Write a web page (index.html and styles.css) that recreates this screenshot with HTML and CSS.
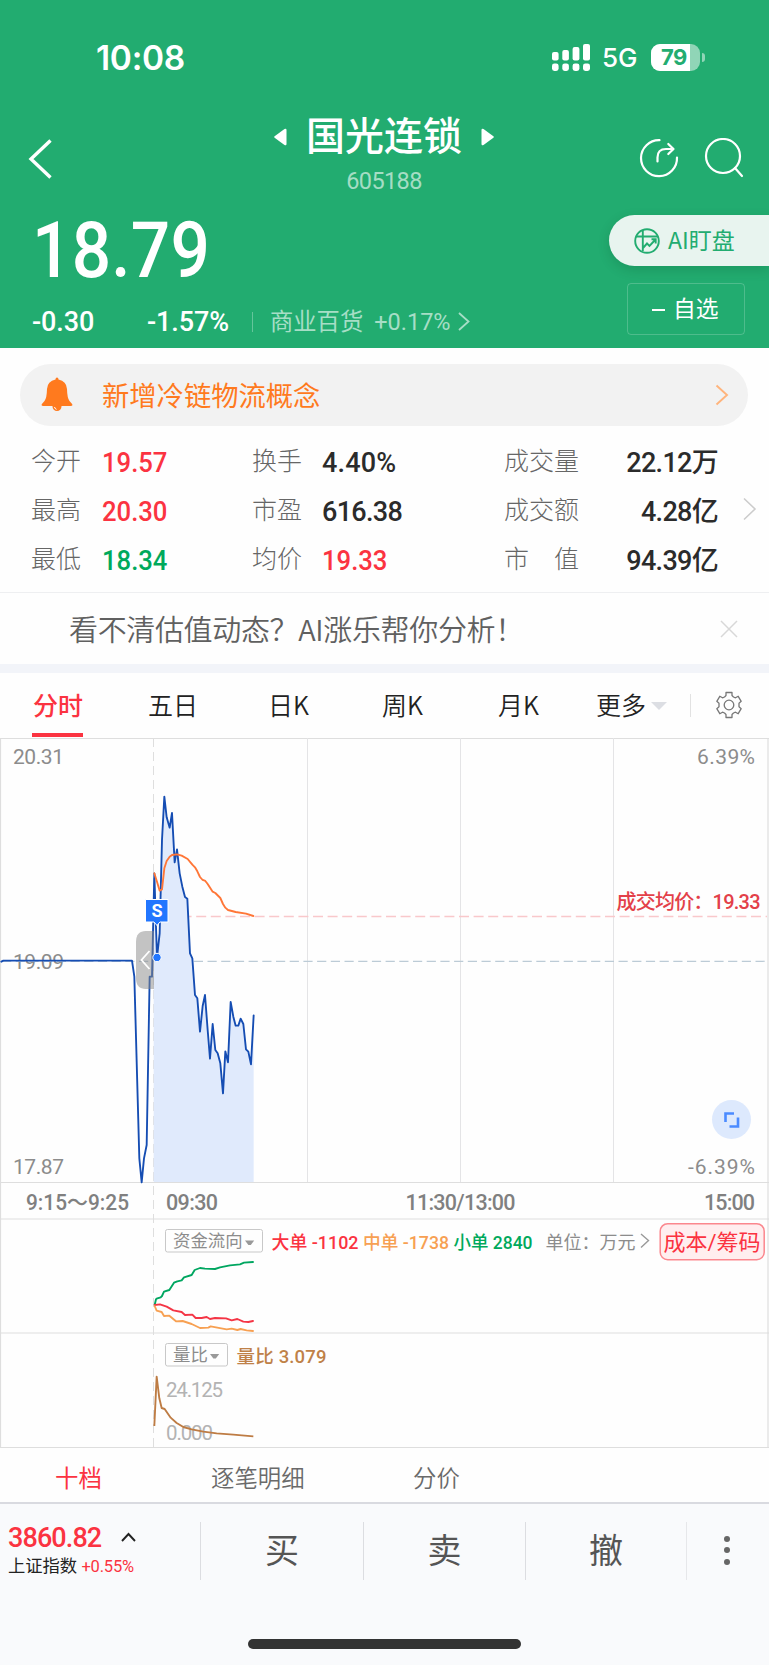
FILE: index.html
```html
<!DOCTYPE html>
<html lang="zh-CN">
<head>
    <meta charset="UTF-8">
    <title>国光连锁 605188</title>
    <link rel="stylesheet" href="styles.css">
</head>
<body>
    <header class="header">
        <div class="status-bar">
            <span class="time">10:08</span>
            <div class="status-icons">
                <svg class="signal" width="38" height="27" viewBox="0 0 38 27" fill="#fff">
                    <rect x="0" y="8" width="6.6" height="8.4" rx="2"/><rect x="10.3" y="6" width="6.6" height="10.4" rx="2"/>
                    <rect x="20.6" y="3" width="6.8" height="13.4" rx="2"/><rect x="31" y="0" width="7" height="16.4" rx="2"/>
                    <rect x="0" y="19.4" width="6.6" height="7.6" rx="2.4"/><rect x="10.3" y="19.4" width="6.6" height="7.6" rx="2.4"/>
                    <rect x="20.6" y="19.4" width="6.8" height="7.6" rx="2.4"/><rect x="31" y="19.4" width="7" height="7.6" rx="2.4"/>
                </svg>
                <span class="network">5G</span>
                <span class="battery"><span class="battery-level">79</span></span>
                <span class="battery-nub"></span>
            </div>
        </div>

        <div class="title-bar">
            <svg class="back" width="24" height="40" viewBox="0 0 24 40" fill="none" stroke="#fff" stroke-width="3.4"><path d="M22.5 1.5 3 20l19.500 18.500"/></svg>
            <div class="title">
                <div class="name-row">
                    <svg width="13" height="18" viewBox="0 0 13 18" fill="#fff"><path d="M.6 8.300 10.500 1Q12.500 0 12.500 2v14q0 2-2 1L.6 9.700Q-.2 9 .6 8.300z"/></svg>
                    <h1>国光连锁</h1>
                    <svg width="13" height="18" viewBox="0 0 13 18" fill="#fff"><path d="M12.400 8.300 2.500 1Q.5 0 .5 2v14q0 2 2 1l9.900-7.300q.8-.7 0-1.400z"/></svg>
                </div>
                <div class="code">605188</div>
            </div>
            <div class="title-actions">
                <svg width="40" height="40" viewBox="0 0 40 40" fill="none" stroke="#fff" stroke-width="2.2" stroke-linecap="round" stroke-linejoin="round">
                    <path d="M20.500 2.200A18 18 0 1 0 38 19.500M18.500 23.500v-4q0-8.500 8.500-8.500h7M29.300 6l5.200 5-5.200 5"/>
                </svg>
                <svg width="40" height="40" viewBox="0 0 40 40" fill="none" stroke="#fff" stroke-width="2.200" stroke-linecap="round">
                    <circle cx="19" cy="18" r="17"/><path d="m31 30 7 8"/>
                </svg>
            </div>
        </div>

        <div class="quote">
            <div class="quote-left">
                <div class="price">18.79</div>
                <div class="change-row">
                    <span class="change">-0.30</span>
                    <span class="change-pct">-1.57%</span>
                    <span class="sector">商业百货</span>
                    <span class="sector-pct">+0.17%</span>
                    <svg width="12" height="19" viewBox="0 0 12 19" fill="none" stroke="#a6dec6" stroke-width="1.800"><path d="m1 1 9.500 8.500L1 18"/></svg>
                </div>
            </div>
            <div class="quote-right">
                <div class="ai-watch">
                    <svg width="26" height="26" viewBox="0 0 26 26" fill="none" stroke="#22ac70" stroke-width="1.900">
                        <circle cx="13" cy="13" r="11.800"/><path d="M2 8.500h22M8.800 2v21M9 20l4-4.500 2.500 2.500 6-6.500M17.500 11.300h4.200v4.200"/>
                    </svg>
                    <span>AI盯盘</span>
                </div>
                <div class="watchlist"><i></i>自选</div>
            </div>
        </div>
    </header>

    <div class="notice">
        <svg class="bell" width="32" height="35" viewBox="0 0 32 35" fill="#ff7a1e">
            <path d="M14.500 2.500Q14.500.5 16 .5t1.500 2Q25.500 4 26 12q.2 9 2.500 12l2.800 3.200q.7 1.800-1.300 1.800H2Q0 29 .7 27.200L3.500 24Q5.800 21 6 12q.5-8 8.500-9.500z"/>
            <path d="M11.500 28.500h9v1a4.500 4.500 0 0 1-9 0z"/><path d="M13.500 30q.3 1.800 2 2.300" fill="none" stroke="#fff" stroke-width="1"/>
        </svg>
        <span class="notice-text">新增冷链物流概念</span>
        <svg width="14" height="22" viewBox="0 0 14 22" fill="none" stroke="#ffb47c" stroke-width="1.900"><path d="m1.500 1.500 10.500 9.500-10.500 9.500"/></svg>
    </div>

    <section class="stats">
        <div class="stats-grid">
            <span class="label">今开</span><b class="up">19.57</b>
            <span class="label">换手</span><b class="pct">4.40%</b>
            <span class="label">成交量</span><b class="right">22.12万</b>
            <span class="label">最高</span><b class="up">20.30</b>
            <span class="label">市盈</span><b>616.38</b>
            <span class="label">成交额</span><b class="right">4.28亿</b>
            <span class="label">最低</span><b class="down">18.34</b>
            <span class="label">均价</span><b class="up">19.33</b>
            <span class="label">市　值</span><b class="right">94.39亿</b>
        </div>
        <svg width="14" height="24" viewBox="0 0 14 24" fill="none" stroke="#ccc" stroke-width="1.600"><path d="m1 1.500 11 10.500L1 22.500"/></svg>
    </section>

    <div class="promo">
        <span>看不清估值动态？AI涨乐帮你分析！</span>
        <svg width="18" height="18" viewBox="0 0 18 18" stroke="#d8d8d8" stroke-width="1.500"><path d="m1 1 16 16M17 1 1 17"/></svg>
    </div>

    <nav class="period-tabs">
        <span class="active">分时</span>
        <span>五日</span>
        <span>日K</span>
        <span>周K</span>
        <span>月K</span>
        <span class="more">更多<i class="caret"></i></span>
        <svg class="gear" width="28" height="28" viewBox="0 0 28 28" fill="none" stroke="#777" stroke-width="1.300" stroke-linejoin="round">
            <path d="M11 1.500h6v3l1.500 1.500 2 .8 2.700-1.500 3 5-2.200 1.900v3.600l2.200 1.900-3 5-2.700-1.500-2 .8-1.500 1.500v3h-6v-3L9.500 22l-2-.8-2.700 1.500-3-5L4 15.800v-3.600l-2.200-1.900 3-5 2.700 1.500 2-.8L11 4.500z"/>
            <circle cx="14" cy="14" r="4.800"/>
        </svg>
    </nav>

    <svg class="chart" width="769" height="710" viewBox="0 738 769 710">
        <!-- grid -->
        <g stroke="#dedede" fill="none">
            <path d="M0 738.500h769M0 1182.500h769M0 1219h769M0 1333h769M0 1447.500h769" stroke-width="1.200"/>
            <path d="M.5 738v710M768 738v710" stroke-width="1.200"/>
            <path d="M307.500 738v444M460.500 738v444M613.500 738v444" stroke="#e4e4e6"/>
            <path d="M153.500 738v710" stroke-dasharray="9 5"/>
        </g>

        <!-- price labels -->
        <g class="axis">
            <text x="13" y="763.500" textLength="51" lengthAdjust="spacing">20.31</text>
            <text x="13" y="968.500" textLength="51">19.09</text>
            <text x="13" y="1173.500" textLength="51">17.87</text>
            <text x="697" y="763.500" textLength="58">6.39%</text>
            <text x="688" y="1173.500" textLength="67">-6.39%</text>
        </g>

        <!-- intraday price and average -->
        <path d="M167 916.500h600" stroke="#f9c8cb" stroke-width="1.300" stroke-dasharray="10 4.600"/>
        <path d="M2 961.300h766" stroke="#bccbd6" stroke-width="1.200" stroke-dasharray="9.200 4.500"/>
        <g transform="translate(0 730) scale(.33333)" fill="none" stroke-linejoin="round" stroke-linecap="round">
            <path class="area" d="M461 1356V500l2-70 4 130 4 122 8-72 7-280 7-130 7 62 9 31 7-44 8 148 7-39 8 72 8 40 8 31 7 5 8 164 7 15 8 110 7 10 8 100 8-77 7-33 8 105 7 86 8-104 8 78 7 10 8 30 8 90 7-126 8 33 8-181 8 44 7 27h8l7-21 8 16 8 76 7 7 8 38 8-147V1356z"/>
            <path d="M4 695 10 692H396l7 48 15 545 7 72 7-72 8-40 9-505h7l7-310 4 130 4 122 8-72 7-280 7-130 7 62 9 31 7-44 8 148 7-39 8 72 8 40 8 31 7 5 8 164 7 15 8 110 7 10 8 100 8-77 7-33 8 105 7 86 8-104 8 78 7 10 8 30 8 90 7-126 8 33 8-181 8 44 7 27h8l7-21 8 16 8 76 7 7 8 38 8-147" stroke="#154db3" stroke-width="5.600"/>
            <path d="M463 430 471 455 479 482 486 478 493 415 500 393 509 380 516 375 531 373 545 377 563 387 577 404 585 412 592 424 600 441 608 450 616 453 623 462 638 485 646 489 661 504 669 522 676 533 684 540 707 546 738 551 760 558" stroke="#ff7637" stroke-width="5.600"/>
        </g>
        <text class="avg-label" x="616.500" y="908.500" textLength="144">成交均价：19.33</text>

        <!-- collapse handle -->
        <path d="M154 931h-8q-10 0-10 11v36q0 11 10 11h8z" fill="#888" fill-opacity=".5"/>
        <path d="m149.500 951-8 9 8 9" fill="none" stroke="#fff" stroke-width="1.800"/>

        <!-- sell marker -->
        <path d="M145.500 899.500h22.500v22.500h-8l-3 3.500-3-3.500h-8.500z" fill="#2176ff" stroke="#fff" stroke-width="1"/>
        <text class="sell" x="157" y="917" text-anchor="middle">S</text>
        <circle cx="157" cy="957.500" r="4.200" fill="#2176ff" stroke="#fff" stroke-width="1"/>

        <!-- fullscreen -->
        <circle cx="731.500" cy="1119.500" r="19.500" fill="#dde9fd"/>
        <path d="M725.500 1122v-8.500h8.500M738 1117.500v9h-8.500" fill="none" stroke="#4b8bff" stroke-width="2.600"/>

        <!-- time labels -->
        <g class="axis time-axis">
            <text x="26" y="1209.500" textLength="103" lengthAdjust="spacingAndGlyphs">9:15～9:25</text>
            <text x="166" y="1209.500" textLength="52">09:30</text>
            <text x="405.500" y="1209.500" textLength="110">11:30/13:00</text>
            <text x="704" y="1209.500" textLength="51">15:00</text>
        </g>

        <!-- money flow -->
        <g>
            <rect class="select" x="165.500" y="1229.500" width="97" height="22.500" rx="2"/>
            <text class="select-text" x="173" y="1247">资金流向</text>
            <path d="M245 1240.500h9.200l-3.400 4.500h-2.400z" fill="#999"/>
            <text class="legend" x="271.500" y="1249" textLength="87" lengthAdjust="spacingAndGlyphs" fill="#fb3341">大单 -1102</text>
            <text class="legend" x="363" y="1249" textLength="86" lengthAdjust="spacingAndGlyphs" fill="#f7a052">中单 -1738</text>
            <text class="legend" x="453.500" y="1249" textLength="79" lengthAdjust="spacingAndGlyphs" fill="#00a95c">小单 2840</text>
            <text class="unit" x="545.500" y="1249" textLength="90">单位：万元</text>
            <path d="m641 1234 7.500 6.500-7.500 7" fill="none" stroke="#999" stroke-width="1.400"/>
            <rect x="660.200" y="1223.700" width="104" height="36" rx="7.500" fill="#ffeeef" stroke="#fb878e" stroke-width="1.500"/>
            <text class="chips" x="663.500" y="1249.500" textLength="97">成本/筹码</text>
        </g>
        <g transform="translate(0 1180) scale(.33333)" fill="none" stroke-width="5.600" stroke-linejoin="round" stroke-linecap="round">
            <path stroke="#00a660" d="M464 375 468 358 472 355 482 352 486 348 492 335 508 330 522 308 532 304 545 301 552 292 575 285 584 270 600 264 615 266 645 267 660 262 690 256 720 253 732 248 759 246"/>
            <path stroke="#f43545" d="M464 375 480 373 500 380 520 391 545 396 555 405 577 404 587 414 605 414 620 411 630 417 645 414 678 415 695 421 712 417 730 425 745 426 759 423"/>
            <path stroke="#f7a052" d="M464 378 470 392 485 396 492 408 508 407 528 424 548 423 575 432 600 444 625 443 632 439 680 448 695 446 712 450 722 447 740 451 759 453"/>
        </g>

        <!-- volume ratio -->
        <rect class="select" x="165.500" y="1343.500" width="62" height="22.500" rx="2"/>
        <text class="select-text" x="173" y="1361">量比</text>
        <path d="M210 1354h9.200l-3.400 4.500h-2.400z" fill="#999"/>
        <text class="legend" x="236.500" y="1363" textLength="90" fill="#bf8148">量比 3.079</text>
        <text class="ratio-axis" x="166" y="1397" textLength="57">24.125</text>
        <text class="ratio-axis" x="166" y="1440" textLength="47">0.000</text>
        <path transform="translate(0 1180) scale(.33333)" fill="none" stroke="#be7c44" stroke-width="5.600" stroke-linejoin="round" d="M463 738 470 590 478 655 485 684 494 687 512 713 530 729 550 741 575 748 610 755 650 760 700 764 760 769"/>
    </svg>

    <nav class="detail-tabs">
        <span class="active">十档</span>
        <span>逐笔明细</span>
        <span>分价</span>
    </nav>

    <footer class="bottom-bar">
        <div class="actions">
            <div class="index">
                <div class="index-value">3860.82
                    <svg width="15" height="10" viewBox="0 0 15 10" fill="none" stroke="#222" stroke-width="1.900"><path d="m1 9 6.500-7L14 9"/></svg>
                </div>
                <div class="index-name">上证指数 <span>+0.55%</span></div>
            </div>
            <div class="action">买</div>
            <div class="action">卖</div>
            <div class="action">撤</div>
            <div class="menu"><i></i><i></i><i></i></div>
        </div>
        <div class="home-indicator"></div>
    </footer>
</body>
</html>
```
FILE: styles.css
```css
* {
    box-sizing: border-box;
}

body {
    margin: 0;
    width: 769px;
    height: 1665px;
    overflow: hidden;
    background: #fefefe;
    color: #2b2b2b;
    font-family: Roboto, "Noto Sans CJK SC", sans-serif;
}

svg {
    display: block;
    flex: none;
}

span, h1, b {
    white-space: nowrap;
}

/* header */
.header {
    height: 348px;
    background: #22ac70;
    color: #fff;
}

.status-bar {
    height: 115px;
    padding: 0 64px 0 96px;
    display: flex;
    justify-content: space-between;
    align-items: center;
    font-family: Inter, sans-serif;
}

.time {
    font-size: 33.5px;
    font-weight: 600;
    letter-spacing: -0.3px;
}

.status-icons {
    display: flex;
    align-items: center;
}

.network {
    margin-left: 12px;
    width: 49px;
    font-size: 26px;
    font-weight: 500;
}

.battery {
    width: 49px;
    height: 27px;
    border-radius: 9px;
    background: #90d5b7;
    overflow: hidden;
}

.battery-level {
    display: block;
    width: 39px;
    height: 27px;
    padding-left: 10px;
    background: #fff;
    color: #22ac70;
    font-size: 22px;
    font-weight: 700;
    line-height: 27px;
    letter-spacing: -0.5px;
}

.battery-nub {
    margin-left: 2px;
    width: 3px;
    height: 9px;
    border-radius: 0 3px 3px 0;
    background: #90d5b7;
}

.title-bar {
    height: 85px;
    padding: 0 25px 0 28px;
    display: grid;
    grid-template-columns: 105px 1fr 109px;
}

.back {
    margin-top: 24px;
}

.name-row {
    display: flex;
    justify-content: center;
    align-items: center;
    gap: 19px;
    height: 43px;
}

h1 {
    margin: 0;
    padding-top: 1px;
    font-size: 39px;
    font-weight: 500;
    line-height: 42px;
}

.code {
    margin-top: 9px;
    text-align: center;
    font-size: 23.5px;
    line-height: 28px;
    letter-spacing: -0.6px;
    color: rgba(255, 255, 255, 0.6);
}

.title-actions {
    display: flex;
    justify-content: flex-end;
    gap: 25px;
    padding-top: 23px;
}

.quote {
    display: flex;
    justify-content: space-between;
}

/* condensed digits */
.price {
    margin-left: 32px;
    height: 96px;
    padding-top: 3px;
    font-size: 77px;
    font-weight: 500;
    line-height: 97px;
    letter-spacing: 0.3px;
    transform: scaleX(0.9);
    transform-origin: left;
}

.change-row {
    height: 50px;
    padding: 1px 0 0 32px;
    display: flex;
    align-items: center;
    font-size: 27px;
    font-weight: 500;
    letter-spacing: -0.1px;
}

.change {
    width: 115px;
}

.change-pct {
    width: 105px;
}

.sector {
    padding-left: 17px;
    border-left: 1.5px solid rgba(255, 255, 255, 0.3);
    color: #a6dec6;
    font-size: 23.3px;
    font-weight: 400;
    line-height: 20px;
    letter-spacing: 0;
}

.sector-pct {
    width: 84px;
    margin-left: 11px;
    color: #a6dec6;
    font-size: 23.5px;
    font-weight: 400;
    letter-spacing: 0;
}

.quote-right {
    padding-top: 15px;
    display: flex;
    flex-direction: column;
    align-items: flex-end;
}

.ai-watch {
    width: 160px;
    height: 51px;
    padding-left: 25px;
    display: flex;
    align-items: center;
    gap: 8px;
    border-radius: 26px 0 0 26px;
    background: #e8f4ef;
    color: #22ac70;
    font-family: "Noto Sans CJK SC", sans-serif;
    font-size: 23px;
    box-shadow: 0 4px 12px rgba(0, 60, 30, 0.18);
}

.ai-watch span {
    padding-bottom: 4px;
}

.watchlist {
    width: 118px;
    height: 52px;
    margin: 17px 24px 0 0;
    padding: 0 0 4px 24px;
    display: flex;
    align-items: center;
    gap: 8px;
    border: 1px solid rgba(255, 255, 255, 0.2);
    border-radius: 4px;
    font-size: 22.8px;
}

.watchlist i {
    width: 13px;
    height: 2px;
    margin-top: 6px;
    background: #fff;
}

/* notice */
.notice {
    height: 62px;
    margin: 16px 21px 0 20px;
    padding: 0 19px 0 21px;
    display: flex;
    align-items: center;
    border-radius: 31px;
    background: #f2f2f2;
}

.bell {
    margin-bottom: 2px;
}

.notice-text {
    flex: 1;
    margin-left: 29px;
    padding-bottom: 2px;
    color: #ff7a1e;
    font-size: 27.3px;
}

/* stats */
.stats {
    height: 167px;
    padding: 11px 13px 0 31px;
    display: flex;
    border-bottom: 1px solid #eeeff1;
}

.stats svg {
    margin: 60px 0 0 25px;
}

.stats-grid {
    display: grid;
    grid-template-columns: 71px 150px 70px 182px 88px 126px;
    grid-auto-rows: 49px;
    line-height: 49px;
}

.label {
    color: #666;
    font-size: 25px;
    font-weight: 300;
}

b {
    padding-top: 2px;
    font-size: 27px;
    font-weight: 500;
    letter-spacing: -0.7px;
}

.pct {
    letter-spacing: 0.2px;
}

.right {
    text-align: right;
}

.up {
    color: #fb3341;
}

.down {
    color: #00a95c;
}

.up, .down {
    letter-spacing: 0;
    transform: scaleX(0.95);
    transform-origin: left;
}

/* promo */
.promo {
    height: 71px;
    padding: 0 31px 0 69px;
    display: flex;
    justify-content: space-between;
    align-items: center;
    color: #606060;
    font-family: "Noto Sans CJK SC", sans-serif;
    font-size: 29px;
    font-weight: 350;
    letter-spacing: -0.35px;
}

.promo span {
    padding-bottom: 2px;
}

/* chart period */
.period-tabs {
    height: 74px;
    border-top: 9px solid #f2f4f9;
    padding-left: 32px;
    display: grid;
    grid-template-columns: 116px 120px 114px 116px 98px 118px 28px;
    font-family: "Noto Sans CJK SC", sans-serif;
    font-size: 25px;
    font-weight: 350;
    line-height: 63px;
    color: #222;
}

.period-tabs .active {
    width: 51px;
    height: 64px;
    padding-left: 1px;
    border-bottom: 4px solid #fb3341;
    color: #fb3341;
    font-weight: 500;
}

.more {
    display: flex;
    align-items: flex-start;
    position: relative;
}

.caret {
    margin: 29px 0 0 5px;
    border: 8px solid transparent;
    border-top-color: #dcdee3;
    border-bottom: 0;
}

.more::after {
    content: "";
    position: absolute;
    top: 21px;
    right: 23px;
    width: 1px;
    height: 23px;
    background: #e2e2e2;
}

.gear {
    margin-top: 18px;
    margin-left: 1px;
}

/* chart */
.axis {
    fill: #8c8c8c;
    font-size: 21px;
}

.time-axis {
    fill: #808080;
    font-size: 21.5px;
    font-weight: 500;
}

.area {
    fill: #e0eafc;
}

.avg-label {
    fill: #e34049;
    font-size: 20px;
    font-weight: 500;
}

.sell {
    fill: #fff;
    font-size: 18px;
    font-weight: 700;
}

.select {
    fill: none;
    stroke: #c8c8c8;
}

.select-text {
    fill: #8c8c8c;
    font-size: 17.400px;
}

.legend {
    font-size: 18.5px;
    font-weight: 500;
}

.unit {
    fill: #8c8c8c;
    font-size: 18px;
}

.chips {
    fill: #fb3341;
    font-size: 22px;
}

.ratio-axis {
    fill: #b3b3b3;
    font-size: 20.500px;
}

/* order book tabs */
.detail-tabs {
    height: 56px;
    padding-left: 55px;
    display: grid;
    grid-template-columns: 156px 202px 100px;
    border-bottom: 2px solid #d9dae0;
    color: #6a6a6a;
    font-size: 23.400px;
    font-weight: 350;
    line-height: 62px;
}

.detail-tabs span {
    height: 54px;
}

.detail-tabs .active {
    color: #fb3341;
    font-weight: 400;
}

/* bottom bar */
.bottom-bar {
    height: 161px;
    padding-top: 18px;
    background: #f9fafc;
}

.actions {
    height: 58px;
    display: grid;
    grid-template-columns: 200px 163px 162px 161px 83px;
}

.index {
    padding-left: 8px;
}

.index-value {
    display: flex;
    align-items: center;
    gap: 20px;
    height: 31px;
    color: #fb3341;
    font-size: 27px;
    font-weight: 500;
    letter-spacing: -0.9px;
}

.index-value svg {
    margin-bottom: 2px;
}

.index-name {
    color: #222;
    font-size: 17.300px;
    line-height: 27px;
}

.index-name span {
    color: #fb3341;
    font-size: 16.500px;
    letter-spacing: -0.200px;
}

.action {
    border-left: 1px solid #dcdde1;
    color: #555;
    font-size: 34px;
    line-height: 58px;
    text-align: center;
}

.menu {
    display: flex;
    flex-direction: column;
    align-items: center;
    justify-content: center;
    gap: 5.500px;
    padding: 0 2px 2px 0;
    border-left: 1px solid #e6e7ea;
}

.menu i {
    width: 6px;
    height: 6px;
    border-radius: 3px;
    background: #666;
}

.home-indicator {
    width: 273px;
    height: 10px;
    margin: 59px auto 0;
    border-radius: 5px;
    background: #333;
}
```
